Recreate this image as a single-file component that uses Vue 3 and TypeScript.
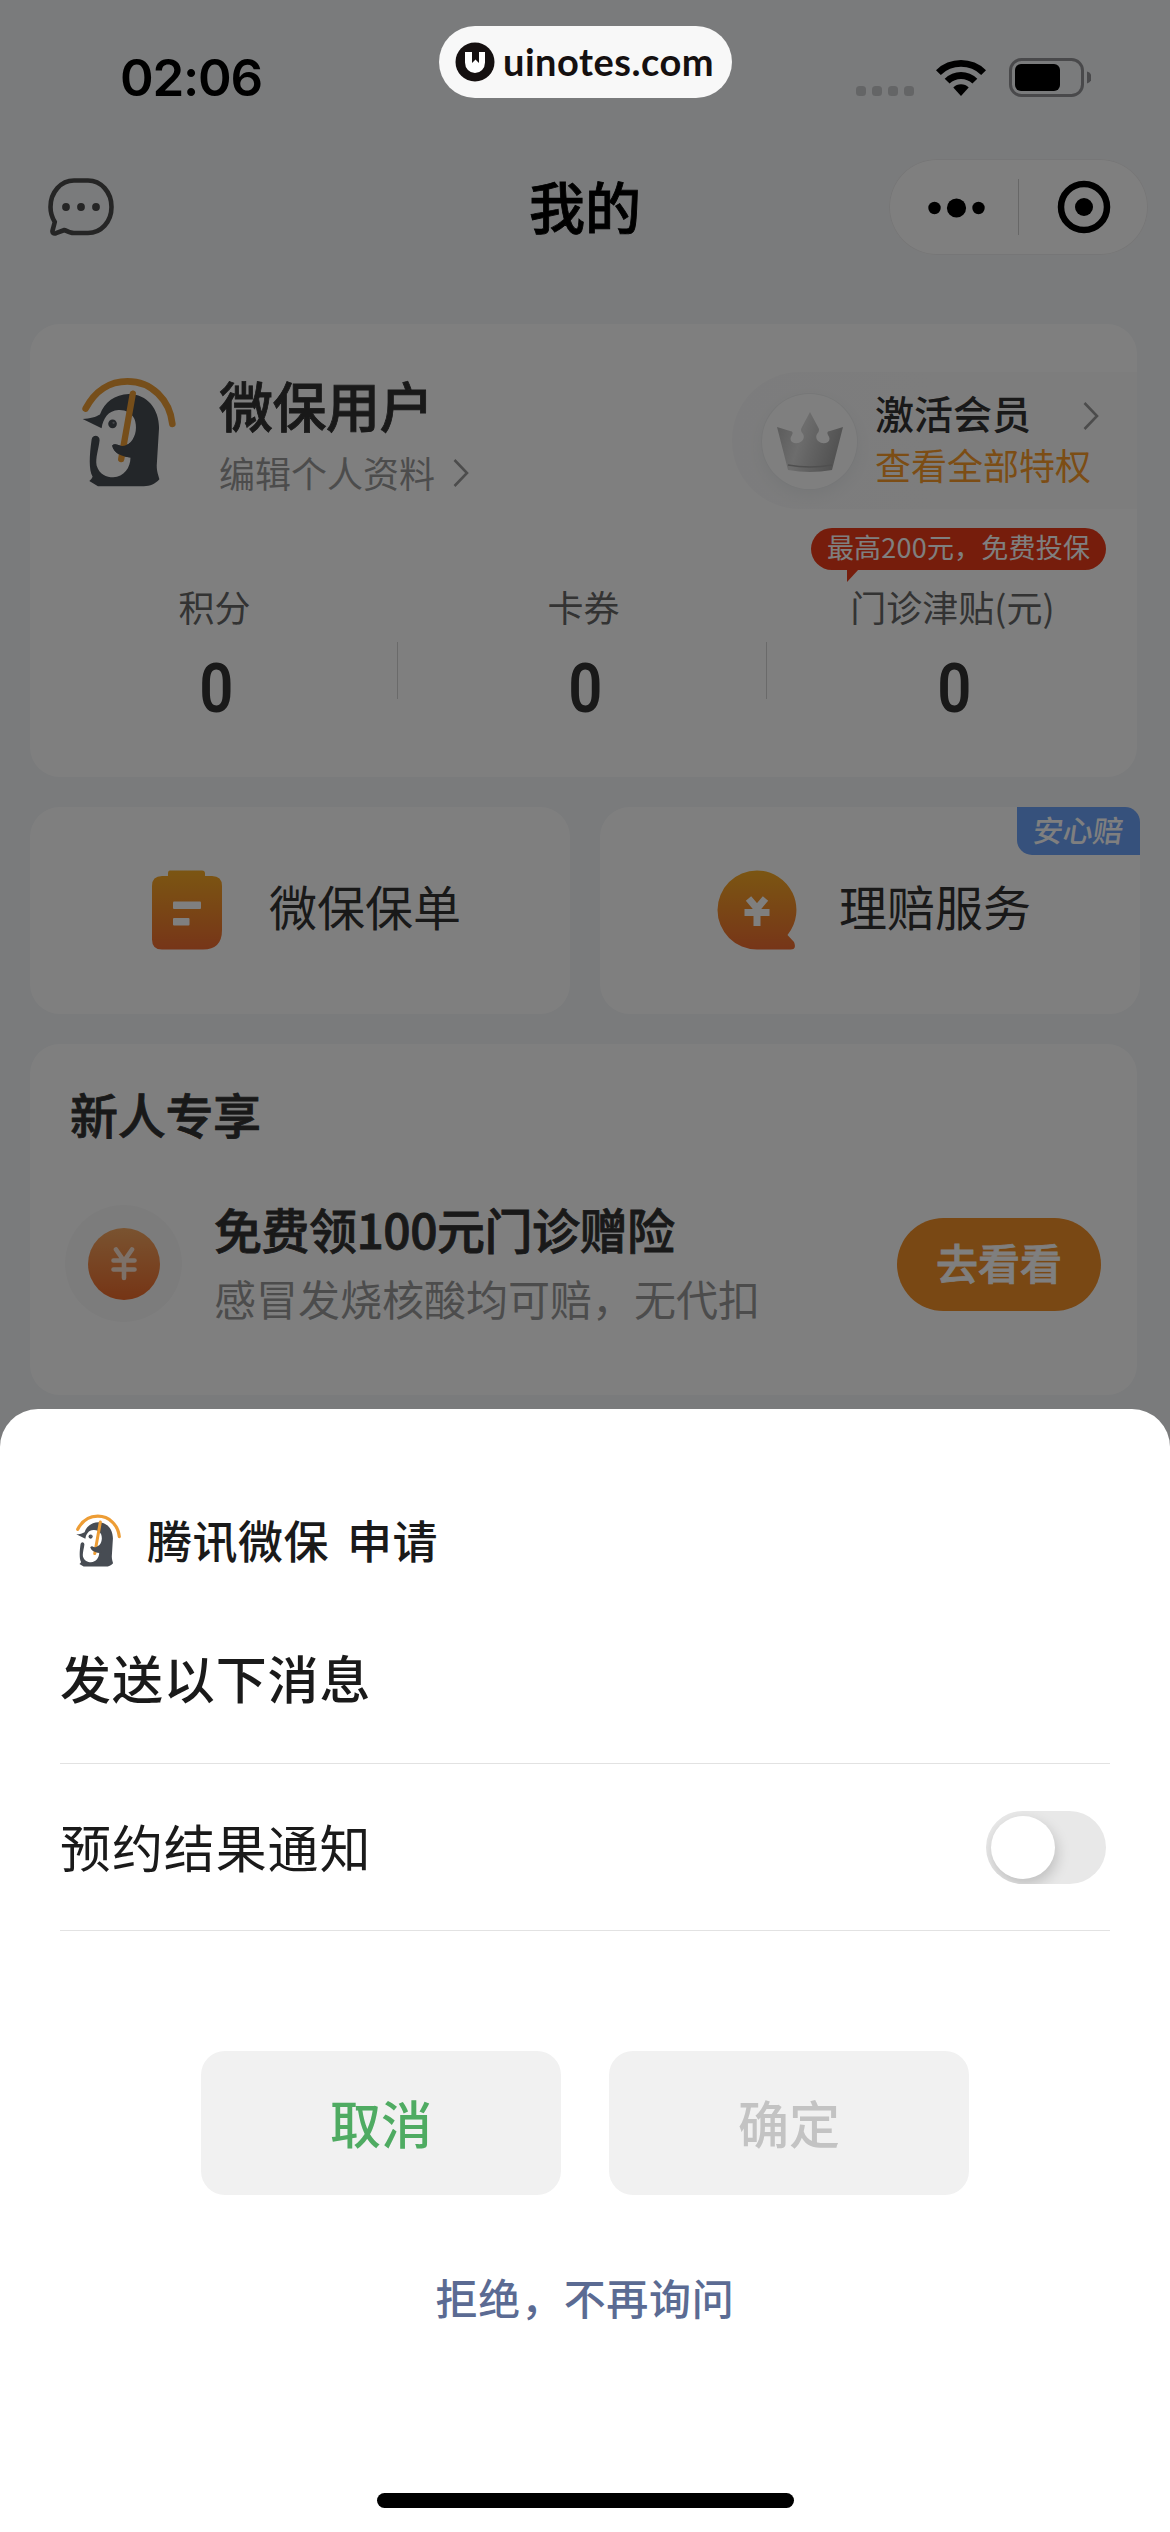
<script setup lang="ts">
import { defineComponent, h, ref } from 'vue'

interface Stat {
  label: string
  value: number
  tip?: string
}

const stats: Stat[] = [
  { label: '积分', value: 0 },
  { label: '卡券', value: 0 },
  { label: '门诊津贴(元)', value: 0, tip: '最高200元，免费投保' },
]

const notify = ref(false)

const ink = '#474c53'
const amber = '#ed9d35'

const Penguin = defineComponent({
  name: 'Penguin',
  setup() {
    return () =>
      h('svg', { viewBox: '60 47 295 341', fill: 'none' }, [
        h('path', {
          d: 'M77 147C105 93 150 65 203 65C275 65 330 120 338 193',
          stroke: amber,
          'stroke-width': 20,
          'stroke-linecap': 'round',
        }),
        h('path', {
          d: 'M68 178C90 178 108 172 120 165C133 128 165 104 207 103C262 103 298 148 298 205L291 318C291 338 296 346 299 360C286 374 272 381 252 381L114 381L88 365Q96 358 98 352C86 330 88 290 95 240Q97 229 108 229Q119 231 119 242C116 270 106 295 110 318C118 345 140 354 160 354C192 352 212 325 212 294C185 292 160 280 157 258Q163 252 173 256C185 262 200 260 212 248C230 228 232 200 224 178C214 158 196 150 176 151C145 153 130 175 125 206Z',
          fill: ink,
        }),
        h('circle', { cx: 158, cy: 193, r: 13, fill: ink }),
        h('circle', { cx: 161, cy: 190, r: 3.5, fill: '#8b8f95' }),
        h('path', {
          d: 'M219 102L184 299',
          stroke: amber,
          'stroke-width': 19,
          'stroke-linecap': 'round',
        }),
        h('path', {
          d: 'M157 258Q163 252 173 256C185 262 200 260 212 248L226 290L212 294C185 292 160 280 157 258Z',
          fill: ink,
        }),
      ])
  },
})
</script>

<template>
  <div class="screen">
    <div class="page">
      <div class="status">
        <span class="time">02:06</span>
        <div class="signals">
          <span class="cell"><i v-for="n in 4" :key="n"></i></span>
          <svg class="wifi" viewBox="0 0 50 37">
            <path d="M0 11.2A35.5 35.5 0 0 1 50 11.2L45.2 16A28.6 28.6 0 0 0 4.8 16Z" />
            <path d="M8.7 19.8A23 23 0 0 1 41.3 19.8L36.4 24.6A16.3 16.3 0 0 0 13.6 24.6Z" />
            <path d="M17.3 28.4A11 11 0 0 1 32.7 28.4L25 37Z" />
          </svg>
          <svg class="battery" viewBox="0 0 82 39">
            <rect x="1.5" y="1.5" width="72" height="36" rx="11" fill="none" stroke="#929396" stroke-width="3" />
            <rect x="6" y="6" width="45" height="27" rx="6" fill="#000" />
            <path d="M78 13.5A6.2 6.2 0 0 1 78 25.5Z" fill="#929396" />
          </svg>
        </div>
      </div>

      <div class="nav">
        <svg class="chat" viewBox="0 0 66 58" fill="none">
          <path
            d="M26 2.5H40C53 2.5 63.5 14 63.5 29C63.5 44 53 55 40 55H26C22 55 19.5 53.6 16.5 52L8 55.2C5.5 56 4 54.6 4.6 52.3L6.8 44C4 39.5 2.5 34.5 2.5 29C2.5 14 13 2.5 26 2.5Z"
            stroke="#4a4a4a"
            stroke-width="4.6"
            stroke-linejoin="round"
          />
          <circle cx="18" cy="29" r="3.9" fill="#4a4a4a" />
          <circle cx="33" cy="29" r="3.9" fill="#4a4a4a" />
          <circle cx="48" cy="29" r="3.9" fill="#4a4a4a" />
        </svg>
        <h1>我的</h1>
        <div class="capsule">
          <svg viewBox="0 0 259 96">
            <circle cx="45.5" cy="49" r="6.2" />
            <circle cx="67.5" cy="49" r="9.6" />
            <circle cx="89.5" cy="49" r="6.2" />
            <path d="M129.5 20V76" stroke="#cfcfcf" stroke-width="1" />
            <circle cx="195" cy="48" r="23" fill="none" stroke="#000" stroke-width="6.5" />
            <circle cx="195" cy="48" r="9" />
          </svg>
        </div>
      </div>

      <div class="content">
        <section class="card profile">
          <div class="who">
            <Penguin class="avatar" />
            <div class="names">
              <strong>微保用户</strong>
              <span>
                编辑个人资料
                <svg class="chev" viewBox="0 0 16 28"><path d="M1.5 1L14 14L1.5 27" /></svg>
              </span>
            </div>
            <div class="member">
              <div class="crown">
                <svg viewBox="0 0 68 62">
                  <defs>
                    <linearGradient id="silver" x1="0" x2="1" y1="0" y2="0.3">
                      <stop offset="0" stop-color="#b2b2b2" />
                      <stop offset=".45" stop-color="#dadada" />
                      <stop offset=".62" stop-color="#c9c9c9" />
                      <stop offset="1" stop-color="#a6a6a6" />
                    </linearGradient>
                  </defs>
                  <path
                    d="M34 1L42.5 17Q44 20 41 23Q39 27 42 30Q47 34 52 31Q55 28 52 24Q50 20 54 20L67 16L56 59Q34 63 12 59L1 16L14 20Q18 20 16 24Q13 28 16 31Q21 34 26 30Q29 27 27 23Q24 20 25.5 17Z"
                    fill="url(#silver)"
                  />
                  <path d="M12 54Q34 58 56 54" stroke="#9e9e9e" stroke-width="1.5" fill="none" />
                </svg>
              </div>
              <div class="member-text">
                <b>激活会员</b>
                <em>查看全部特权</em>
              </div>
              <svg class="chev member-chev" viewBox="0 0 16 28"><path d="M1.5 1L14 14L1.5 27" /></svg>
            </div>
          </div>
          <div class="stats">
            <div v-for="s in stats" :key="s.label" class="stat">
              <span class="label">{{ s.label }}</span>
              <span class="value">{{ s.value }}</span>
              <span v-if="s.tip" class="tip">{{ s.tip }}</span>
            </div>
          </div>
        </section>

        <div class="pair">
          <section class="card entry">
            <svg viewBox="0 0 80 80">
              <defs>
                <linearGradient id="policy" x1="0" x2="0" y1="0" y2="1">
                  <stop offset="0" stop-color="#f7ac25" />
                  <stop offset="1" stop-color="#ee6b31" />
                </linearGradient>
              </defs>
              <path
                d="M23 .5H55Q58 .5 58 3.5V6H65Q75 6 75 16V60Q75 79.5 56 79.5H15Q5 79.5 5 69.5V16Q5 6 15 6H21V3.5Q21 .5 23 .5Z"
                fill="url(#policy)"
              />
              <rect x="26" y="31.5" width="28" height="7.5" rx="1" fill="#fff" />
              <rect x="26" y="48" width="16.5" height="7.5" rx="1" fill="#fff" />
            </svg>
            <span>微保保单</span>
          </section>
          <section class="card entry">
            <svg viewBox="0 0 80 80">
              <path
                d="M40 .5A39.5 39.5 0 0 1 70.5 65L77 72Q80 79.5 73.5 79.5H40A39.5 39.5 0 0 1 40 .5Z"
                fill="url(#policy)"
              />
              <path
                d="M31.5 28.5L40 38.5L48.5 28.5M40 37V56M27.5 42.5H52.5"
                fill="none"
                stroke="#fff"
                stroke-width="7"
              />
            </svg>
            <span>理赔服务</span>
            <i class="flag"><b>安心赔</b></i>
          </section>
        </div>

        <section class="card gift">
          <h2>新人专享</h2>
          <div class="offer">
            <div class="coin">
              <svg viewBox="0 0 72 72">
                <defs>
                  <linearGradient id="coin" x1="0" x2="0" y1="0" y2="1">
                    <stop offset="0" stop-color="#f4a761" />
                    <stop offset="1" stop-color="#ec6a2b" />
                  </linearGradient>
                </defs>
                <circle cx="36" cy="36" r="36" fill="url(#coin)" />
                <path
                  d="M28 21.5L36 33L44 21.5M36 33V50M25.5 32.5H46.5M25.5 41.5H46.5"
                  fill="none"
                  stroke="#fbe3d2"
                  stroke-width="4.6"
                  stroke-linecap="round"
                />
              </svg>
            </div>
            <div class="offer-text">
              <b>免费领100元门诊赠险</b>
              <span>感冒发烧核酸均可赔，无代扣</span>
            </div>
            <button class="go">去看看</button>
          </div>
        </section>
      </div>
    </div>

    <div class="mask"></div>

    <div class="brand">
      <svg viewBox="0 0 40 40">
        <circle cx="20" cy="20" r="19.5" fill="#151010" />
        <path d="M10 10H17V21L20.5 17.5L24 21V10H30V20.5A10 10.5 0 0 1 10 20.5Z" fill="#fff" />
      </svg>
      <span>uinotes.com</span>
    </div>

    <div class="sheet">
      <div class="applicant">
        <Penguin class="mini" />
        <span>腾讯微保</span>
        <span>申请</span>
      </div>
      <h3>发送以下消息</h3>
      <div class="row">
        <span>预约结果通知</span>
        <button class="toggle" :class="{ on: notify }" @click="notify = !notify"><i></i></button>
      </div>
      <div class="actions">
        <button class="cancel">取消</button>
        <button class="confirm">确定</button>
      </div>
      <a class="never">拒绝，不再询问</a>
      <div class="home"></div>
    </div>
  </div>
</template>

<style>
body {
  margin: 0;
}
</style>

<style scoped>
.screen {
  position: relative;
  width: 1170px;
  height: 2532px;
  overflow: hidden;
  font-family: 'Noto Sans CJK SC', sans-serif;
  color: #333;
  background: #f4f6f8;
}
.screen * {
  box-sizing: border-box;
}
svg {
  display: block;
  flex: none;
}
h1,
h2,
h3 {
  margin: 0;
  font-weight: 500;
}
h1,
h2,
.names strong,
.offer-text b,
.go {
  -webkit-text-stroke: 0.8px currentColor;
}
button {
  border: 0;
  padding: 0;
  font: inherit;
}
i,
em {
  font-style: normal;
}
.status {
  display: flex;
  justify-content: space-between;
  height: 159px;
  padding: 47px 79px 0 120px;
}
.time {
  font: 600 51px/62px Inter, sans-serif;
  color: #000;
  letter-spacing: -1.2px;
}
.signals {
  display: flex;
  height: 39px;
  margin-top: 11px;
}
.cell {
  display: flex;
  align-self: flex-end;
  gap: 6px;
  margin: 0 22px 1px 0;
}
.cell i {
  width: 10px;
  height: 10px;
  border-radius: 3.5px;
  background: #c9cacd;
}
.wifi {
  width: 50px;
  height: 37px;
  margin: 1px 23px 0 0;
}
.battery {
  width: 82px;
  height: 39px;
}
.nav {
  display: grid;
  grid-template-columns: 1fr auto 1fr;
  align-items: center;
  height: 96px;
  padding: 0 22px;
}
.chat {
  width: 66px;
  height: 58px;
  margin-left: 26px;
}
.nav h1 {
  margin-top: -4px;
  font-size: 56px;
  line-height: 80px;
  color: #000;
}
.capsule {
  justify-self: end;
  width: 259px;
  height: 96px;
  border-radius: 48px;
  background: #fff;
  box-shadow: inset 0 0 0 1px #ededee;
}
.content {
  display: flex;
  flex-direction: column;
  gap: 30px;
  padding: 69px 30px 0;
}
.card {
  border-radius: 30px;
  background: #fff;
}
.profile {
  width: 1107px;
  height: 453px;
}
.who {
  display: flex;
  height: 185px;
  padding-left: 50px;
  padding-top: 48px;
}
.avatar {
  width: 98px;
  height: 114px;
  margin-top: 3px;
}
.names {
  display: flex;
  flex-direction: column;
  margin: -4px 0 0 41px;
}
.names strong {
  font-size: 54px;
  font-weight: 500;
  line-height: 74px;
  letter-spacing: -0.5px;
}
.names span {
  display: flex;
  align-items: center;
  gap: 18px;
  margin-top: 4px;
  font-size: 36px;
  line-height: 52px;
  color: #999;
}
.chev {
  width: 16px;
  height: 28px;
  fill: none;
  stroke: #999;
  stroke-width: 2.6;
}
.names .chev {
  margin-top: 2px;
}
.member {
  display: flex;
  width: 405px;
  height: 137px;
  margin-left: auto;
  padding-left: 30px;
  border-radius: 68px 0 0 68px;
  background: linear-gradient(90deg, #f9f9fa, #fbfbfb);
}
.crown {
  display: flex;
  justify-content: center;
  width: 95px;
  height: 95px;
  margin-top: 22px;
  padding-top: 17px;
  border-radius: 50%;
  background: #fff;
  box-shadow: 0 6px 16px #eceef0, 0 0 0 1px #eeefef;
}
.crown svg {
  width: 68px;
  height: 62px;
}
.member-text {
  display: flex;
  flex-direction: column;
  width: 208px;
  margin: 12px 0 0 18px;
  white-space: nowrap;
}
.member-text b {
  font-size: 39px;
  font-weight: 500;
  line-height: 57px;
}
.member-text em {
  margin-top: -3px;
  font-size: 36px;
  line-height: 52px;
  color: #f99b2a;
}
.member-chev {
  margin-top: 30px;
}
.stats {
  display: flex;
}
.stat {
  position: relative;
  display: flex;
  flex: 1;
  flex-direction: column;
  align-items: center;
  padding-top: 71px;
}
.stat + .stat::before {
  content: '';
  position: absolute;
  left: -2px;
  top: 133px;
  width: 1px;
  height: 57px;
  background: #d4d4d4;
}
.label {
  font-size: 36px;
  line-height: 52px;
  color: #666;
}
.value {
  margin: 17px 0 0 3px;
  font: 600 68px/80px Roboto, sans-serif;
  transform: scaleX(0.88);
}
.tip {
  position: absolute;
  top: 19px;
  left: 43px;
  width: 295px;
  height: 42px;
  border-radius: 21px;
  font-size: 27px;
  line-height: 38px;
  letter-spacing: 0.2px;
  text-align: center;
  white-space: nowrap;
  color: #fff;
  background: #ec3b18;
}
.tip::after {
  content: '';
  position: absolute;
  left: 36px;
  top: 41px;
  border-top: 13px solid #ec3b18;
  border-right: 12px solid transparent;
}
.pair {
  display: flex;
  gap: 30px;
}
.entry {
  position: relative;
  display: flex;
  flex: 1;
  height: 207px;
  padding: 63px 0 0 117px;
}
.entry svg {
  width: 80px;
  height: 80px;
}
.entry span {
  margin: 0 0 0 42px;
  font-size: 48px;
  line-height: 70px;
}
.flag {
  position: absolute;
  top: 0;
  right: 0;
  width: 123px;
  height: 48px;
  border-radius: 0 15px 0 15px;
  font-size: 30px;
  line-height: 44px;
  text-align: center;
  color: #fff;
  background: #6ca2f8;
}
.flag b {
  display: block;
  font-weight: 500;
  transform: skewX(-8deg);
}
.gift {
  width: 1107px;
  height: 351px;
  padding: 34px 36px 0 40px;
}
.gift h2 {
  font-size: 48px;
  line-height: 70px;
  letter-spacing: -0.3px;
}
.offer {
  display: flex;
  margin-top: 57px;
}
.coin {
  display: flex;
  align-items: center;
  justify-content: center;
  flex: none;
  width: 117px;
  height: 117px;
  margin-left: -5px;
  border-radius: 50%;
  background: #f9f9f9;
}
.coin svg {
  width: 72px;
  height: 72px;
}
.offer-text {
  display: flex;
  flex-direction: column;
  margin: -12px auto 0 32px;
}
.offer-text b {
  font-size: 48px;
  font-weight: 500;
  line-height: 70px;
  letter-spacing: -0.5px;
}
.offer-text span {
  margin-top: 4px;
  font-size: 42px;
  line-height: 61px;
  color: #999;
}
.go {
  width: 204px;
  height: 93px;
  margin-top: 13px;
  border-radius: 47px;
  padding-bottom: 6px;
  font-size: 42px;
  font-weight: 500;
  color: #fff;
  background: #f39029;
}
.mask {
  position: absolute;
  inset: 0;
  background: rgba(0, 0, 0, 0.5);
}
.brand {
  position: absolute;
  top: 26px;
  left: 439px;
  display: flex;
  align-items: center;
  width: 293px;
  height: 72px;
  padding-left: 16px;
  border-radius: 36px;
  background: #f8f8f8;
}
.brand svg {
  width: 40px;
  height: 40px;
}
.brand span {
  margin: -2px 0 0 8px;
  font: 700 38px/48px Lato, sans-serif;
  letter-spacing: 0.5px;
  color: #151010;
}
.sheet {
  position: absolute;
  left: 0;
  right: 0;
  top: 1409px;
  bottom: 0;
  display: flex;
  flex-direction: column;
  padding: 97px 60px 0;
  border-radius: 38px 38px 0 0;
  color: #1a1a1a;
  background: #fff;
}
.applicant {
  display: flex;
  height: 66px;
  padding-left: 15px;
  font-size: 45px;
  font-weight: 500;
  line-height: 67px;
  letter-spacing: 0.5px;
}
.mini {
  width: 47px;
  height: 55px;
  margin: 7px 25px 0 0;
}
.applicant span + span {
  margin-left: 18px;
}
.sheet h3 {
  height: 192px;
  padding-top: 67px;
  border-bottom: 1px solid #e2e2e2;
  font-size: 51px;
  line-height: 76px;
  letter-spacing: 0.9px;
}
.row {
  display: flex;
  justify-content: space-between;
  height: 167px;
  padding: 45px 4px 0 0;
  border-bottom: 1px solid #e2e2e2;
  font-size: 51px;
  line-height: 74px;
  letter-spacing: 0.9px;
}
.toggle {
  display: flex;
  width: 120px;
  height: 73px;
  margin-top: 2px;
  padding: 5px;
  border-radius: 37px;
  overflow: hidden;
  background: #e8e8e8;
}
.toggle.on {
  justify-content: flex-end;
  background: #07c160;
}
.toggle i {
  width: 64px;
  height: 63px;
  border-radius: 50%;
  background: #fff;
  box-shadow: 2px 6px 14px rgba(0, 0, 0, 0.18);
}
.actions {
  display: flex;
  justify-content: center;
  gap: 48px;
  margin-top: 120px;
}
.actions button {
  width: 360px;
  height: 144px;
  padding-bottom: 2px;
  border-radius: 24px;
  font-size: 51px;
  font-weight: 500;
  background: #f1f1f1;
}
.actions .cancel {
  color: #4fab62;
}
.actions .confirm {
  color: #c3c3c3;
}
.never {
  margin-top: 71px;
  font-size: 42px;
  font-weight: 500;
  line-height: 62px;
  letter-spacing: 0.7px;
  text-align: center;
  color: #5b6b93;
}
.home {
  position: absolute;
  left: 377px;
  bottom: 24px;
  width: 417px;
  height: 15px;
  border-radius: 8px;
  background: #000;
}
</style>
